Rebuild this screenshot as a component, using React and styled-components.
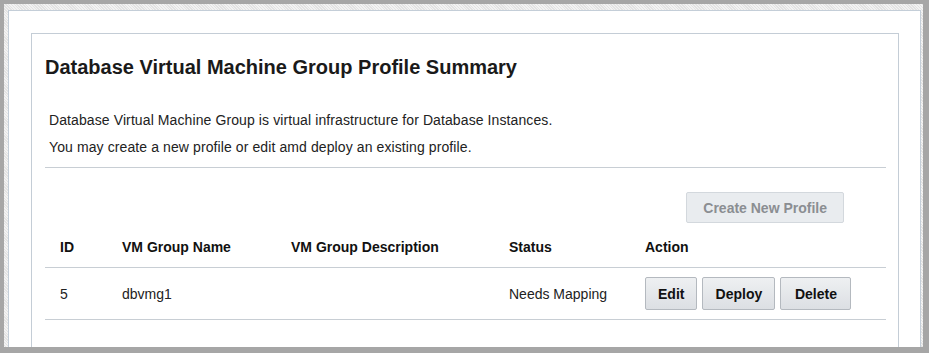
import React from 'react';
import styled, { createGlobalStyle } from 'styled-components';

const GlobalStyle = createGlobalStyle`
  html, body {
    margin: 0;
    padding: 0;
    height: 100%;
    overflow: hidden;
    background: #a6a6a6;
  }
  * {
    box-sizing: border-box;
  }
`;

const Frame = styled.div`
  height: 353px;
  padding: 4px 6px 6px 4px;
  display: flex;
  font-family: 'Liberation Sans', Arial, sans-serif;
`;

const Hatch = styled.div`
  flex: 1;
  display: flex;
  padding: 6px 2px 0 4px;
  background: repeating-linear-gradient(
    45deg,
    #f3f3f3 0px,
    #f3f3f3 1px,
    #e3e3e3 1px,
    #e3e3e3 2px
  );
`;

const Panel = styled.div`
  flex: 1;
  background: #fff;
  border: 1px solid #c4ced8;
  border-bottom: none;
  padding: 22px 21px 0 22px;
  overflow: hidden;
`;

const Card = styled.section`
  border: 1px solid #c4cdd6;
  padding: 0 12px 60px 13px;
  color: #222;
`;

const Title = styled.h1`
  margin: 21px 0 0;
  font-size: 20px;
  line-height: 24px;
  font-weight: bold;
  color: #1a1a1a;
`;

const Intro = styled.div`
  margin-top: 28px;
  padding: 0 0 6px 4px;
  border-bottom: 1px solid #c8ced4;
`;

const Line = styled.p`
  margin: 0;
  font-size: 14px;
  line-height: 27px;
  letter-spacing: 0.1px;
`;

const Toolbar = styled.div`
  display: flex;
  justify-content: flex-end;
  padding: 24px 42px 0 0;
  margin-bottom: 5px;
`;

const Button = styled.button`
  font-family: inherit;
  font-size: 14px;
  font-weight: bold;
  height: ${(p) => (p.$tall ? 33 : 31)}px;
  padding: 0 ${(p) => (p.$wide ? 16 : 12)}px;
  min-width: ${(p) => p.$min || 0}px;
  border-radius: 2px;
  border: 1px solid ${(p) => (p.disabled ? '#d3d8dd' : '#b4b9bf')};
  color: ${(p) => (p.disabled ? '#8b8e92' : '#111')};
  background: ${(p) =>
    p.disabled
      ? '#e9ecef'
      : 'linear-gradient(#eef0f2, #dcdfe3)'};
  cursor: ${(p) => (p.disabled ? 'default' : 'pointer')};
`;

const Row = styled.div`
  display: grid;
  grid-template-columns: 62px 169px 218px 136px 1fr;
  align-items: ${(p) => (p.$head ? 'start' : 'center')};
  height: ${(p) => (p.$head ? 40 : 52)}px;
  padding: ${(p) => (p.$head ? '11px' : '0')} 0 0 15px;
  border-bottom: 1px solid #c8ced4;
  font-size: 14px;
  line-height: 16px;
  font-weight: ${(p) => (p.$head ? 'bold' : 'normal')};
  color: ${(p) => (p.$head ? '#111' : '#222')};
`;

const Actions = styled.div`
  display: flex;
  gap: 5px;
`;

const rows = [{ id: 5, name: 'dbvmg1', description: '', status: 'Needs Mapping' }];

export default function App() {
  return (
    <>
      <GlobalStyle />
      <Frame>
        <Hatch>
          <Panel>
            <Card>
              <Title>Database Virtual Machine Group Profile Summary</Title>
              <Intro>
                <Line>Database Virtual Machine Group is virtual infrastructure for Database Instances.</Line>
                <Line>You may create a new profile or edit amd deploy an existing profile.</Line>
              </Intro>
              <Toolbar>
                <Button disabled $wide>
                  Create New Profile
                </Button>
              </Toolbar>
              <Row $head>
                <span>ID</span>
                <span>VM Group Name</span>
                <span>VM Group Description</span>
                <span>Status</span>
                <span>Action</span>
              </Row>
              {rows.map((r) => (
                <Row key={r.id}>
                  <span>{r.id}</span>
                  <span>{r.name}</span>
                  <span>{r.description}</span>
                  <span>{r.status}</span>
                  <Actions>
                    <Button $tall $min={52}>Edit</Button>
                    <Button $tall $min={73}>Deploy</Button>
                    <Button $tall $min={71}>Delete</Button>
                  </Actions>
                </Row>
              ))}
            </Card>
          </Panel>
        </Hatch>
      </Frame>
    </>
  );
}
